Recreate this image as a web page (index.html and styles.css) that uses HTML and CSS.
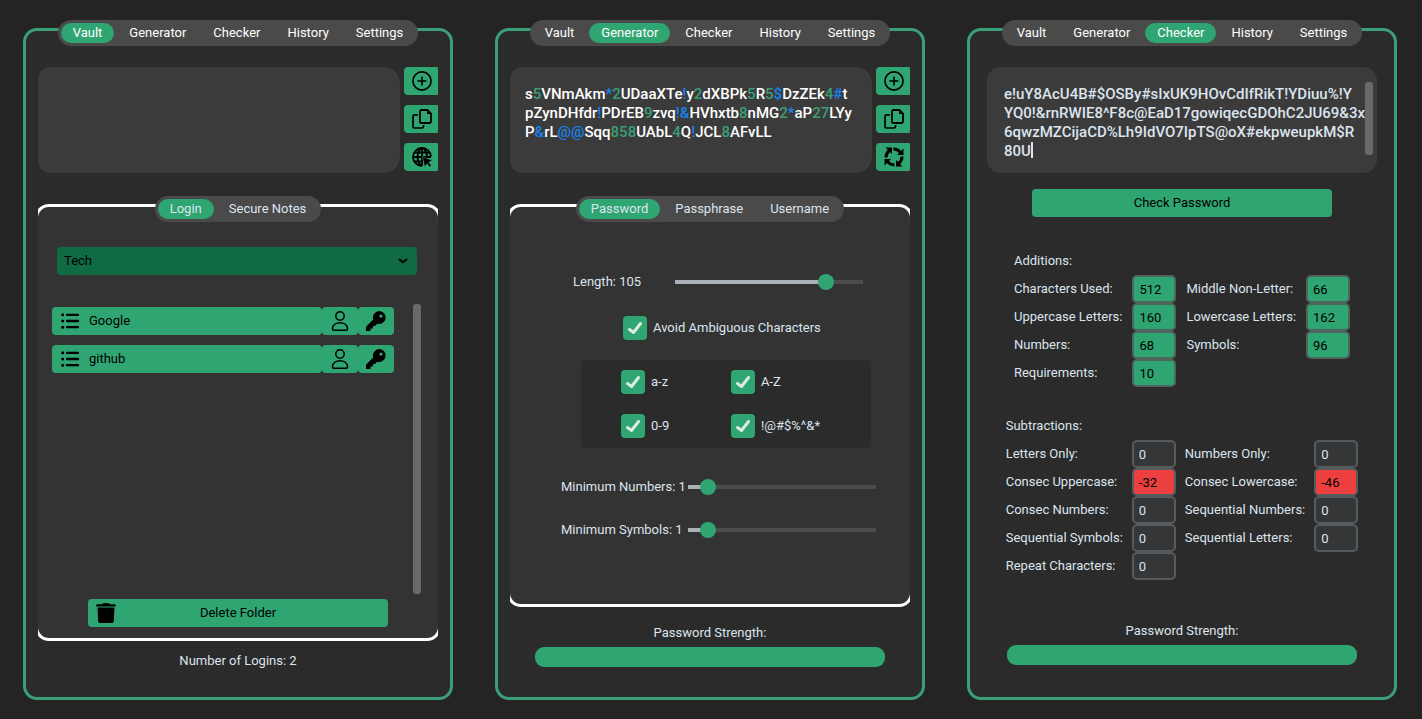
FILE: index.html
```html
<!DOCTYPE html>
<html lang="en">
<head>
<meta charset="utf-8">
<title>Password Manager</title>
<link rel="stylesheet" href="styles.css">
</head>
<body>
<svg class="sprite" aria-hidden="true">
  <symbol id="i-add" viewBox="0 0 20 20"><circle cx="10" cy="10" r="9.1" fill="none" stroke="currentColor" stroke-width="1.6"/><path d="M10 5.5v9M5.500 10h9" stroke="currentColor" stroke-width="1.6"/></symbol>
  <symbol id="i-copy" viewBox="0 0 20 20"><path d="M6 5.800H2.500Q1 5.800 1 7.300V17.500Q1 19 2.500 19H10Q11.500 19 11.500 17.500V16" fill="none" stroke="currentColor" stroke-width="1.700"/><path d="M9.500 1H15.500L19 4.500V12.500Q19 14 17.500 14H9.500Q8 14 8 12.500V2.500Q8 1 9.500 1Z" fill="none" stroke="currentColor" stroke-width="1.800"/><path d="M15 1v4H19.500V4.500L15.500 1Z" fill="currentColor"/></symbol>
  <symbol id="i-web" viewBox="0 0 20 20"><g fill="none" stroke="currentColor" stroke-width="1.800"><path d="M10 19A9 9 0 1 1 19 9.500"/><path d="M8.700 18.800C4.500 14 4.500 6 9 1.200M11.500 1.200Q15 4.800 15 9M10 1v18M1 10h18M2.500 5.500h15M2.500 14.500H11"/></g><path d="M10.300 9.800L20.500 13.300L16.800 15.300L19.300 18.600L17.700 20L15 16.800L12.800 20Z" fill="currentColor" stroke="#2fa572" stroke-width="0.600"/></symbol>
  <symbol id="i-cycle" viewBox="0 0 20 20"><g fill="none" stroke="currentColor" stroke-width="3"><path d="M9.500 2Q14 2 16.500 5.500"/><path d="M18 9.500Q18 14 14.500 16.500"/><path d="M10.500 18Q6 18 3.500 14.500"/><path d="M2 10.500Q2 6 5.500 3.500"/></g><path d="M19.500 1.500v6.500h-6.500ZM18.500 19.500h-6.500v-6.500ZM0.500 18.500v-6.500h6.500ZM1.500 0.500h6.500v6.500Z" fill="currentColor"/></symbol>
  <symbol id="i-list" viewBox="0 0 18 18"><path d="M6 2.800h11M6 9h11M6 15.200h11" stroke="currentColor" stroke-width="2.300" stroke-linecap="round"/><g fill="currentColor"><circle cx="1.700" cy="2.800" r="1.500"/><circle cx="1.700" cy="9" r="1.500"/><circle cx="1.700" cy="15.200" r="1.500"/></g></symbol>
  <symbol id="i-user" viewBox="0 0 20 20"><g fill="none" stroke="currentColor" stroke-width="1.500"><circle cx="10" cy="5" r="4.200"/><path d="M4 19.200Q2.300 19.200 2.500 17.300C3.300 9.800 16.700 9.800 17.500 17.300Q17.700 19.200 16 19.200Z"/></g></symbol>
  <symbol id="i-key" viewBox="0 0 20 20"><path fill-rule="evenodd" fill="currentColor" d="M13.500 0A6.500 6.500 0 0 0 7.200 8.500L0 15.700V20H4.500V17.500H7V15H9L11.200 12.700A6.500 6.500 0 1 0 13.500 0ZM15 3.400A1.700 1.700 0 1 1 15 6.800A1.700 1.700 0 1 1 15 3.400Z"/></symbol>
  <symbol id="i-trash" viewBox="0 0 20 20"><path fill="currentColor" d="M6.500 0.500Q10 -0.300 13.500 0.500V1.200H18.500Q19.800 1.200 19.800 2.500V3.600H0.200V2.500Q0.200 1.200 1.500 1.200H6.500ZM1.500 4.600H18.500L17.800 18.500Q17.700 20 16.200 20H3.800Q2.300 20 2.200 18.500Z"/></symbol>
</svg>

<main class="board">

  <section class="panel">
    <nav class="tabs">
      <button class="tab tab--on">Vault</button><button class="tab">Generator</button><button class="tab">Checker</button><button class="tab">History</button><button class="tab">Settings</button>
    </nav>
    <div class="display">
      <output class="display__text" aria-label="Selected entry"></output>
      <div class="display__actions">
        <button class="action" aria-label="Add"><svg class="icon"><use href="#i-add"/></svg></button>
        <button class="action" aria-label="Copy"><svg class="icon"><use href="#i-copy"/></svg></button>
        <button class="action" aria-label="Open website"><svg class="icon"><use href="#i-web"/></svg></button>
      </div>
    </div>
    <div class="inset">
      <div class="tabs tabs--inner">
        <button class="tab tab--on">Login</button><button class="tab">Secure Notes</button>
      </div>
      <select class="folder" aria-label="Folder"><option>Tech</option></select>
      <div class="vault">
        <ul class="logins">
          <li class="login">
            <button class="login__name"><svg class="icon icon--list"><use href="#i-list"/></svg>Google</button>
            <button class="login__tool" aria-label="Copy username"><svg class="icon"><use href="#i-user"/></svg></button>
            <button class="login__tool" aria-label="Copy password"><svg class="icon"><use href="#i-key"/></svg></button>
          </li>
          <li class="login">
            <button class="login__name"><svg class="icon icon--list"><use href="#i-list"/></svg>github</button>
            <button class="login__tool" aria-label="Copy username"><svg class="icon"><use href="#i-user"/></svg></button>
            <button class="login__tool" aria-label="Copy password"><svg class="icon"><use href="#i-key"/></svg></button>
          </li>
        </ul>
        <div class="scrollbar"></div>
      </div>
      <button class="wide-button delete"><svg class="icon"><use href="#i-trash"/></svg><span class="delete__text">Delete Folder</span></button>
    </div>
    <p class="count">Number of Logins: 2</p>
  </section>

  <section class="panel">
    <nav class="tabs">
      <button class="tab">Vault</button><button class="tab tab--on">Generator</button><button class="tab">Checker</button><button class="tab">History</button><button class="tab">Settings</button>
    </nav>
    <div class="display">
      <output class="display__text" aria-label="Generated password">s<i class="d">5</i>VNmAkm<i class="s">*</i><i class="d">2</i>UDaaXTe<i class="s">!</i>y<i class="d">2</i>dXBPk<i class="d">5</i>R<i class="d">5</i><i class="s">$</i>DzZEk<i class="d">4</i><i class="s">#</i>t<br>pZynDHfdr<i class="s">!</i>PDrEB<i class="d">9</i>zvq<i class="s">!&amp;</i>HVhxtb<i class="d">8</i>nMG<i class="d">2</i><i class="s">*</i>aP<i class="d">27</i>LYy<br>P<i class="s">&amp;</i>rL<i class="s">@@</i>Sqq<i class="d">858</i>UAbL<i class="d">4</i>Q<i class="s">!</i>JCL<i class="d">8</i>AFvLL</output>
      <div class="display__actions">
        <button class="action" aria-label="Add"><svg class="icon"><use href="#i-add"/></svg></button>
        <button class="action" aria-label="Copy"><svg class="icon"><use href="#i-copy"/></svg></button>
        <button class="action" aria-label="Generate again"><svg class="icon"><use href="#i-cycle"/></svg></button>
      </div>
    </div>
    <div class="inset inset--generator">
      <div class="tabs tabs--inner">
        <button class="tab tab--on">Password</button><button class="tab">Passphrase</button><button class="tab">Username</button>
      </div>
      <div class="field field--length">
        <label for="length">Length: 105</label>
        <input class="slider" id="length" type="range" min="0" max="1000" value="831" style="--fill: 80%">
      </div>
      <label class="check check--avoid"><input class="check__box" type="checkbox" checked>Avoid Ambiguous Characters</label>
      <div class="charsets">
        <label class="check"><input class="check__box" type="checkbox" checked>a-z</label>
        <label class="check"><input class="check__box" type="checkbox" checked>A-Z</label>
        <label class="check"><input class="check__box" type="checkbox" checked>0-9</label>
        <label class="check"><input class="check__box" type="checkbox" checked>!@#$%^&amp;*</label>
      </div>
      <div class="field field--numbers">
        <label for="numbers">Minimum Numbers: 1</label>
        <input class="slider" id="numbers" type="range" min="0" max="14" value="1" style="--fill: 10%">
      </div>
      <div class="field field--symbols">
        <label for="symbols">Minimum Symbols: 1</label>
        <input class="slider" id="symbols" type="range" min="0" max="14" value="1" style="--fill: 10%">
      </div>
    </div>
    <p class="strength strength--generator">Password Strength:</p>
    <div class="meter" role="meter" aria-label="Password strength" aria-valuenow="100"></div>
  </section>

  <section class="panel">
    <nav class="tabs">
      <button class="tab">Vault</button><button class="tab">Generator</button><button class="tab tab--on">Checker</button><button class="tab">History</button><button class="tab">Settings</button>
    </nav>
    <div class="entry">
      <textarea class="entry__text" aria-label="Password to check" spellcheck="false" wrap="off">e!uY8AcU4B#$OSBy#sIxUK9HOvCdIfRikT!YDiuu%!Y
YQ0!&amp;rnRWIE8^F8c@EaD17gowiqecGDOhC2JU69&amp;3x
6qwzMZCijaCD%Lh9IdVO7IpTS@oX#ekpweupkM$R
80U</textarea>
      <span class="entry__caret"></span>
      <div class="scrollbar"></div>
    </div>
    <button class="wide-button wide-button--check">Check Password</button>
    <div class="scores">
      <h2 class="scores__title">Additions:</h2>
      <label for="a1">Characters Used:</label><input id="a1" class="score score--plus" value="512" readonly>
      <label for="a2">Middle Non-Letter:</label><input id="a2" class="score score--plus" value="66" readonly>
      <label for="a3">Uppercase Letters:</label><input id="a3" class="score score--plus" value="160" readonly>
      <label for="a4">Lowercase Letters:</label><input id="a4" class="score score--plus" value="162" readonly>
      <label for="a5">Numbers:</label><input id="a5" class="score score--plus" value="68" readonly>
      <label for="a6">Symbols:</label><input id="a6" class="score score--plus" value="96" readonly>
      <label for="a7">Requirements:</label><input id="a7" class="score score--plus" value="10" readonly>
    </div>
    <div class="scores scores--minus">
      <h2 class="scores__title">Subtractions:</h2>
      <label for="m1">Letters Only:</label><input id="m1" class="score" value="0" readonly>
      <label for="m2">Numbers Only:</label><input id="m2" class="score" value="0" readonly>
      <label for="m3">Consec Uppercase:</label><input id="m3" class="score score--minus" value="-32" readonly>
      <label for="m4">Consec Lowercase:</label><input id="m4" class="score score--minus" value="-46" readonly>
      <label for="m5">Consec Numbers:</label><input id="m5" class="score" value="0" readonly>
      <label for="m6">Sequential Numbers:</label><input id="m6" class="score" value="0" readonly>
      <label for="m7">Sequential Symbols:</label><input id="m7" class="score" value="0" readonly>
      <label for="m8">Sequential Letters:</label><input id="m8" class="score" value="0" readonly>
      <label for="m9">Repeat Characters:</label><input id="m9" class="score" value="0" readonly>
    </div>
    <p class="strength strength--checker">Password Strength:</p>
    <div class="meter" role="meter" aria-label="Password strength" aria-valuenow="100"></div>
  </section>

</main>
</body>
</html>
```

FILE: styles.css
```css
:root {
  --green: #2fa572;
  --page: #242424;
  --panel: #2b2b2b;
  --inset: #333333;
  --field: #3b3b3b;
  --text: #dce4ee;
}

*, *::before, *::after { box-sizing: border-box; }

body {
  margin: 0;
  background: var(--page);
  color: var(--text);
  font: 13px/16px Roboto, "Liberation Sans", sans-serif;
}

button, input, select, textarea { font: inherit; color: inherit; margin: 0; }
button { border: 0; padding: 0; color: #000; }
p, h2, ul { margin: 0; padding: 0; font: inherit; list-style: none; }

.sprite { position: absolute; width: 0; height: 0; }
.icon { display: block; width: 20px; height: 20px; color: #000; overflow: visible; }
.icon--list { width: 18px; height: 18px; }

.board {
  display: flex;
  gap: 42px;
  min-height: 100vh;
  padding: 28px 25px 19px 23px;
}

.panel {
  flex: 1;
  display: flex;
  flex-direction: column;
  min-width: 0;
  padding: 0 12px 28px;
  border: 3px solid #3a9f76;
  border-radius: 14px;
  background: var(--panel);
}

/* Tab bars sit on the frame's top edge */
.tabs {
  display: flex;
  gap: 3px;
  align-self: center;
  margin-top: -11px;
  padding: 3px;
  border-radius: 13px;
  background: #4a4a4a;
}
.tabs--inner { margin-top: -8px; }
.tab {
  height: 20px;
  padding: 0 12px;
  border-radius: 10px;
  background: transparent;
  color: #fff;
  white-space: nowrap;
}
.tabs--inner .tab { color: var(--text); }
.tab.tab--on { background: var(--green); }

.display {
  display: flex;
  gap: 4px;
  margin-top: 21px;
}
.display__text {
  flex: 1;
  height: 106px;
  padding: 18px 0 0 15px;
  border-radius: 12px 16px 16px 12px;
  background: var(--field);
  color: #fff;
  font: 500 15px/19px Roboto, sans-serif;
  white-space: nowrap;
}
.display__text i { font-style: normal; }
.d { color: #3a9f76; }
.s { color: #1583f0; }
.display__actions {
  display: flex;
  flex-direction: column;
  gap: 10px;
  width: 34px;
}
.action {
  display: flex;
  align-items: center;
  justify-content: center;
  height: 28px;
  padding-left: 2px;
  border-radius: 4px 1px 1px 4px;
  background: var(--green);
}

/* White frame whose sides are cut off by the clip */
.inset {
  position: relative;
  display: flex;
  flex-direction: column;
  margin-top: 31px;
  padding-bottom: 14px;
  clip-path: inset(-8px 0 0 0);
}
.inset::before {
  content: "";
  position: absolute;
  inset: 0 -3px;
  z-index: -1;
  border: 3px solid #fff;
  border-radius: 14px;
  background: var(--inset);
}
.inset--generator { padding-bottom: 65px; }

.folder {
  appearance: none;
  height: 28px;
  margin: 25px 21px 0 19px;
  padding: 0 7px;
  border: 0;
  border-radius: 4px;
  color: #000;
  background: #106a43 url("data:image/svg+xml,%3Csvg xmlns='http://www.w3.org/2000/svg' width='10' height='6'%3E%3Cpath d='M1.500 1.500L5 4.300L8.500 1.500' fill='none' stroke='black' stroke-width='2' stroke-linecap='round'/%3E%3C/svg%3E") no-repeat right 9px center;
}

.vault {
  display: flex;
  gap: 19px;
  min-height: 290px;
  margin: 29px 17px 5px 14px;
}
.logins {
  flex: 1;
  display: flex;
  flex-direction: column;
  gap: 10px;
  padding-top: 3px;
}
.login { display: flex; }
.login__name {
  flex: 1;
  display: flex;
  align-items: center;
  gap: 10px;
  height: 28px;
  padding: 0 9px;
  border-radius: 4px;
  background: var(--green);
}
.login__tool {
  display: flex;
  align-items: center;
  justify-content: center;
  width: 36px;
  border-radius: 4px;
  background: var(--green);
}
.scrollbar {
  width: 8px;
  border-radius: 3px;
  background: #696969;
}

.wide-button {
  align-self: center;
  width: 300px;
  height: 28px;
  border-radius: 4px;
  background: var(--green);
}
.wide-button--check { margin-top: 16px; }
.delete {
  display: grid;
  grid-template-columns: 20px 1fr 20px;
  align-items: center;
  padding: 0 8px;
}

.count { margin-top: 12px; text-align: center; }

.field {
  display: flex;
  align-items: center;
  height: 24px;
  white-space: nowrap;
}
.field label { width: 127px; }
.field--length { margin: 48px 0 22px; padding-left: 63px; }
.field--length label { width: 102px; }
.field--numbers { margin: 27px 0 19px; padding-left: 51px; }
.field--symbols { padding-left: 51px; }

.slider {
  appearance: none;
  width: 188px;
  height: 16px;
  background: transparent;
}
.slider::-webkit-slider-runnable-track {
  height: 4px;
  background: linear-gradient(to right, #aab0b5 var(--fill), #4a4d50 var(--fill));
}
.slider::-webkit-slider-thumb {
  appearance: none;
  width: 16px;
  height: 16px;
  margin-top: -6px;
  border-radius: 8px;
  background: var(--green);
}

.check {
  display: flex;
  align-items: center;
  gap: 6px;
}
.check--avoid { margin-left: 113px; }
.check__box {
  appearance: none;
  width: 24px;
  height: 24px;
  border-radius: 4px;
  background: var(--green);
}
.check__box:checked {
  background-image: url("data:image/svg+xml,%3Csvg xmlns='http://www.w3.org/2000/svg' width='24' height='24'%3E%3Cpath d='M6.500 13.500L10.500 16.500L17.500 7.500' fill='none' stroke='%23dcebe4' stroke-width='3' stroke-linecap='round' stroke-linejoin='round'/%3E%3C/svg%3E");
}
.charsets {
  display: grid;
  grid-template-columns: 110px 1fr;
  row-gap: 20px;
  margin: 20px 39px 0 71px;
  padding: 10px 0 10px 40px;
  border-radius: 5px;
  background: var(--panel);
}

.strength { text-align: center; }
.strength--generator { margin-top: 18px; }
.strength--checker { margin-top: 43px; }
.meter {
  align-self: center;
  width: 350px;
  height: 20px;
  margin-top: 6px;
  border-radius: 9px;
  background: var(--green);
}

.entry {
  position: relative;
  display: flex;
  height: 106px;
  margin: 21px 5px 0;
  padding: 15px 4px 18px 17px;
  border-radius: 14px;
  background: var(--field);
}
.entry__text {
  flex: 1;
  min-width: 0;
  height: 80px;
  padding: 3px 0 0;
  border: 0;
  outline: 0;
  resize: none;
  overflow: hidden;
  background: transparent;
  font: 500 15px/19px Roboto, sans-serif;
}
.entry__caret {
  position: absolute;
  left: 44px;
  top: 75px;
  width: 2px;
  height: 16px;
  background: var(--text);
}

.scores {
  display: grid;
  grid-template-columns: auto 44px auto 44px;
  grid-auto-rows: 28px;
  column-gap: 10px;
  justify-content: center;
  align-items: center;
  margin-top: 30px;
}
.scores--minus { column-gap: 9px; margin-top: 25px; }
.scores__title { grid-column: 1 / -1; }
.score {
  width: 44px;
  height: 28px;
  padding: 0 5px;
  border: 2px solid #565b5e;
  border-radius: 5px;
  background: #343638;
}
.score--plus { border-color: #4f665e; background: var(--green); color: #000; }
.score--minus { background: #ec4040; color: #000; }
```
